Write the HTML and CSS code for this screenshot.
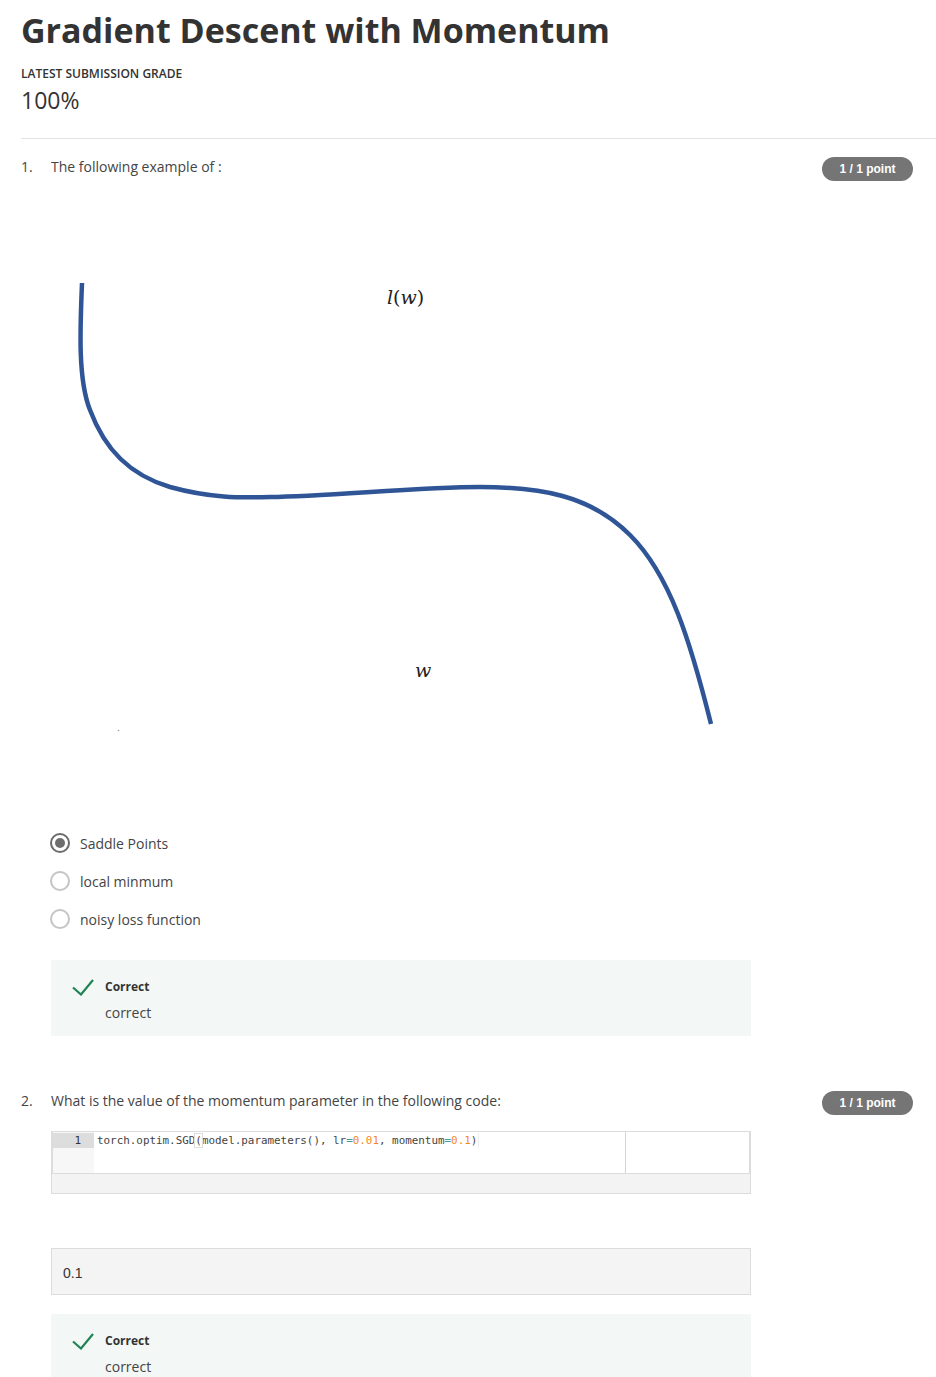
FILE: index.html
```html
<!DOCTYPE html>
<html lang="en">
<head>
<meta charset="utf-8">
<title>Gradient Descent with Momentum</title>
<link rel="stylesheet" href="styles.css">
</head>
<body>
<div class="page">
  <header class="header">
    <h1 class="title">Gradient Descent with Momentum</h1>
    <div class="grade-label">LATEST SUBMISSION GRADE</div>
    <div class="grade-value">100%</div>
  </header>
  <hr class="divider">

  <section class="question q1">
    <div class="qnum">1.</div>
    <div class="qbody">
      <div class="qtext">The following example of :</div>
      <svg class="plot" width="700" height="635" viewBox="51 177 700 635" xmlns="http://www.w3.org/2000/svg">
        <path d="M82,283 C80,330 78,380 90,410 C105,450 130,475 170,487 C210,498 240,498 270,497 C330,496 420,487 480,487 C540,487 590,495 630,535 C670,575 690,640 711,724" fill="none" stroke="#2f5597" stroke-width="4.5"/>
        <text x="387" y="304" class="math"><tspan class="it">l</tspan>(<tspan class="it">w</tspan>)</text>
        <text x="415" y="677" class="math it">w</text>
        <circle cx="118.5" cy="730.5" r="0.8" fill="#8aa0b8"/>
      </svg>
      <div class="options">
        <div class="option"><span class="radio checked"></span><span class="olabel">Saddle Points</span></div>
        <div class="option"><span class="radio"></span><span class="olabel">local minmum</span></div>
        <div class="option"><span class="radio"></span><span class="olabel">noisy loss function</span></div>
      </div>
      <div class="feedback fb1">
        <svg class="check" width="22" height="18" viewBox="0 0 22 18" xmlns="http://www.w3.org/2000/svg"><polyline points="1,9.5 9,16.5 21,2" fill="none" stroke="#1f8354" stroke-width="2.2"/></svg>
        <div class="fbtext">
          <div class="fbtitle">Correct</div>
          <div class="fbbody">correct</div>
        </div>
      </div>
    </div>
    <div class="badge">1 / 1 point</div>
  </section>

  <section class="question q2">
    <div class="qnum">2.</div>
    <div class="qbody">
      <div class="qtext">What is the value of the momentum parameter in the following code:</div>
      <div class="code">
        <div class="editor">
          <div class="gutter"><div class="lineno">1</div></div>
          <div class="lines">
            <div class="line"><span>torch.optim.SGD</span><span class="bracket">(</span><span>model.parameters(), lr</span><span class="op">=</span><span class="num">0.01</span><span>, momentum</span><span class="op">=</span><span class="num">0.1</span><span>)</span></div>
            <div class="ruler"></div>
          </div>
        </div>
        <div class="code-footer"></div>
      </div>
      <div class="answer">0.1</div>
      <div class="feedback fb2">
        <svg class="check" width="22" height="18" viewBox="0 0 22 18" xmlns="http://www.w3.org/2000/svg"><polyline points="1,9.5 9,16.5 21,2" fill="none" stroke="#1f8354" stroke-width="2.2"/></svg>
        <div class="fbtext">
          <div class="fbtitle">Correct</div>
          <div class="fbbody">correct</div>
        </div>
      </div>
    </div>
    <div class="badge">1 / 1 point</div>
  </section>
</div>
</body>
</html>
```
FILE: styles.css
```css
* { box-sizing: border-box; }
html, body { margin: 0; padding: 0; background: #fff; }
body {
  font-family: "Open Sans", "Noto Sans", sans-serif;
  color: #333;
  overflow: hidden;
  height: 1377px;
}
.page { padding-left: 21px; }

.header { padding-top: 8px; }
.title {
  margin: 0;
  font-size: 34px;
  line-height: 44px;
  font-weight: 700;
  color: #333;
}
.grade-label {
  margin-top: 14px;
  font-size: 12px;
  line-height: 16px;
  font-weight: 600;
  color: #333;
}
.grade-value {
  margin-top: 3px;
  font-size: 23px;
  line-height: 30px;
  font-weight: 400;
  color: #333;
}
.divider {
  margin: 23px 0 0 0;
  border: 0;
  border-top: 1px solid #e2e2e2;
  height: 0;
}

.question {
  display: flex;
  align-items: flex-start;
}
.q1 { padding-top: 18px; }
.q2 { padding-top: 55px; }
.qnum {
  width: 30px;
  font-size: 14px;
  line-height: 20px;
  color: #444;
}
.qbody { width: 700px; }
.qtext {
  font-size: 14px;
  line-height: 20px;
  color: #444;
}
.badge {
  margin-left: auto;
  margin-right: 23px;
  width: 91px;
  height: 24px;
  border-radius: 12px;
  background: #757575;
  color: #fff;
  font-family: "Liberation Sans", Arial, sans-serif;
  font-weight: 700;
  font-size: 12px;
  line-height: 24px;
  text-align: center;
}

.plot { display: block; }
.math {
  font-family: "DejaVu Serif", "Liberation Serif", serif;
  font-size: 19px;
  fill: #222;
}
.it { font-style: italic; }

.options { margin-top: 12px; }
.option {
  display: flex;
  align-items: center;
  height: 38px;
}
.radio {
  width: 20px;
  height: 20px;
  margin-left: -1px;
  border-radius: 50%;
  border: 2px solid #c4c4c4;
  background: #fff;
  position: relative;
  flex: none;
}
.radio.checked { border-color: #6b6b6b; }
.radio.checked::after {
  content: "";
  position: absolute;
  left: 3px; top: 3px;
  width: 10px; height: 10px;
  border-radius: 50%;
  background: #6e6e6e;
}
.olabel {
  margin-left: 10px;
  font-size: 14px;
  color: #444;
}

.feedback {
  display: flex;
  align-items: flex-start;
  background: #f3f8f6;
  padding: 18px 0 13px 21px;
}
.fb1 { margin-top: 22px; }
.fb2 { margin-top: 19px; }
.check { flex: none; margin-top: 0; }
.fbtext { margin-left: 11px; }
.fbtitle {
  font-size: 12px;
  line-height: 18px;
  font-weight: 700;
  color: #333;
}
.fbbody {
  margin-top: 7px;
  font-size: 14px;
  line-height: 20px;
  color: #444;
}

.code {
  margin-top: 20px;
  border: 1px solid #dcdcdc;
  background: #f3f3f3;
  height: 63px;
}
.editor {
  display: flex;
  height: 42px;
  background: #fff;
  border: 1px solid #dcdcdc;
  border-top: 0;
}
.gutter {
  width: 41px;
  background: #f7f7f7;
  flex: none;
}
.lineno {
  height: 15px;
  margin-top: 1px;
  background: #dddddd;
  font-family: "DejaVu Sans Mono", monospace;
  font-size: 11px;
  line-height: 15px;
  color: #333;
  text-align: right;
  padding-right: 13px;
}
.lines {
  flex: 1;
  position: relative;
  padding-left: 3px;
  padding-top: 1px;
}
.line {
  display: block;
  width: fit-content;
  font-family: "DejaVu Sans Mono", monospace;
  font-size: 10.9px;
  line-height: 15px;
  color: #444;
  white-space: pre;
  border-right: 1px solid #eee;
  padding-right: 1px;
}
.bracket { outline: 1px solid #dedede; }
.op { color: #3e999f; }
.num { color: #f5871f; }
.ruler {
  position: absolute;
  left: 531px;
  top: 0;
  bottom: 0;
  border-left: 1px solid #c9d8e8;
}
.code-footer { height: 20px; }

.answer {
  margin-top: 54px;
  height: 47px;
  background: #f4f4f4;
  border: 1px solid #dcdcdc;
  padding-left: 11px;
  padding-top: 3px;
  font-family: "Liberation Sans", Arial, sans-serif;
  font-size: 14px;
  line-height: 42px;
  color: #333;
}
```
